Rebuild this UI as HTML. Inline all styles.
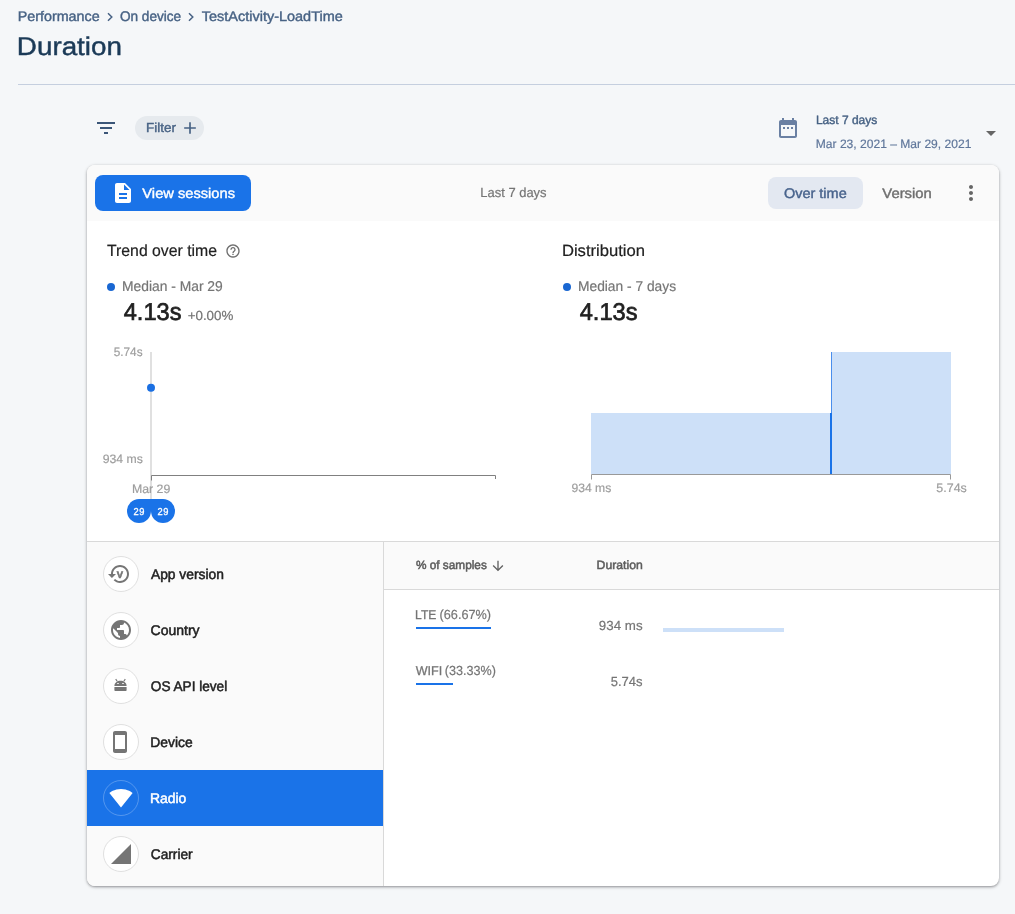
<!DOCTYPE html>
<html lang="en">
<head>
<meta charset="utf-8">
<title>Duration</title>
<style>
*{box-sizing:border-box;margin:0;padding:0}
html,body{width:1015px;height:914px;overflow:hidden}
body{text-rendering:geometricPrecision;background:#f5f7f9;font-family:"Liberation Sans",Arial,sans-serif;color:#212121;position:relative}
#root{position:absolute;left:0;top:0;width:1015px;height:914px;will-change:transform}
.a{position:absolute;white-space:nowrap;line-height:1;display:block}
.t{position:absolute;white-space:nowrap;line-height:20px;height:20px;display:block;transform-origin:0 50%;-webkit-text-stroke:0.2px currentColor}
.m{font-weight:400;-webkit-text-stroke:0.4px currentColor}
svg{display:block}
/* header */
.crumb{color:#476284}
.title{color:#1b3a57}
.sep{left:18px;top:84px;width:997px;height:1px;background:#c5cfdf}
.chip{left:135px;top:116px;width:69px;height:24px;border-radius:12px;background:#e6eaee}
/* card */
.card{left:87px;top:165px;width:912px;height:721px;background:#fff;border-radius:8px;box-shadow:0 1px 2px 0 rgba(30,30,32,.3),0 1px 3px 1px rgba(30,30,32,.15)}
.chead{left:0;top:0;width:912px;height:56px;background:#fafafa;border-radius:8px 8px 0 0}
.btn{left:8px;top:10px;width:156px;height:36px;border-radius:8px;background:#1a73e8}
.tog{left:681px;top:12px;width:95px;height:32px;border-radius:8px;background:#e3e8f1}
.hl{background:#d9d9d9}
.side{left:0;top:377px;width:296px;height:344px;background:#fafafa;border-radius:0 0 0 8px}
.thead{left:297px;top:377px;width:615px;height:47px;background:#fafafa}
.ic{width:36px;height:36px;border-radius:50%;border:1px solid #e0e0e0;background:#fff;left:16px}
.sel{left:0;top:605px;width:296px;height:56px;background:#1a73e8}
.mm{-webkit-text-stroke:0.3px currentColor}
.g7{color:#757575}.g6{color:#616161}.g9{color:#9e9e9e}
</style>
</head>
<body>
<div id="root">

<!-- breadcrumb -->
<span class="t crumb m" id="bc1" style="left:17px;top:6px;font-size:14px;transform:translateX(0.73px) scaleX(1.022) ">Performance</span>
<svg class="a" style="left:104px;top:10px" width="12" height="14" viewBox="0 0 12 14"><path d="M4 3.2l3.8 3.8L4 10.8" fill="none" stroke="#476284" stroke-width="1.5"/></svg>
<span class="t crumb m" id="bc2" style="left:119px;top:6px;font-size:14px;transform:translateX(0.91px) scaleX(0.972) ">On device</span>
<svg class="a" style="left:185px;top:10px" width="12" height="14" viewBox="0 0 12 14"><path d="M4 3.2l3.8 3.8L4 10.8" fill="none" stroke="#476284" stroke-width="1.5"/></svg>
<span class="t crumb m" id="bc3" style="left:201px;top:6px;font-size:14px;transform:translateX(0.85px) scaleX(1.033) ">TestActivity-LoadTime</span>
<h1 class="t title" id="ttl" style="left:16px;top:32px;font-size:25.5px;line-height:30px;height:30px;font-weight:400;-webkit-text-stroke:0.45px currentColor;transform:translateX(0.82px) scaleX(1.091);">Duration</h1>
<div class="a sep"></div>

<!-- filter row -->
<svg class="a" style="left:94px;top:116px" width="24" height="24" viewBox="0 0 24 24"><path fill="#3b5678" d="M10 18h4v-2h-4v2zM3 6v2h18V6H3zm3 7h12v-2H6v2z"/></svg>
<div class="a chip"></div>
<span class="t m" id="flt" style="left:146px;top:118px;font-size:13px;color:#476284;transform:translateX(0.04px) scaleX(1.034) ">Filter</span>
<svg class="a" style="left:180px;top:118px" width="20" height="20" viewBox="0 0 24 24"><path fill="#476284" d="M19 13h-6v6h-2v-6H5v-2h6V5h2v6h6v2z"/></svg>

<!-- date range -->
<svg class="a" style="left:776px;top:116px" width="24" height="24" viewBox="0 0 24 24"><path fill="#6a80a3" d="M9 11H7v2h2v-2zm4 0h-2v2h2v-2zm4 0h-2v2h2v-2zm2-7h-1V2h-2v2H8V2H6v2H5c-1.11 0-1.99.9-1.99 2L3 20c0 1.1.89 2 2 2h14c1.1 0 2-.9 2-2V6c0-1.1-.9-2-2-2zm0 16H5V9h14v11z"/></svg>
<span class="t m" id="d1" style="left:815px;top:110px;font-size:12px;color:#476284;transform:translateX(0.95px) scaleX(0.999) ">Last 7 days</span>
<span class="t" id="d2" style="left:815px;top:134px;font-size:12.2px;color:#60779b;transform:translateX(0.75px) scaleX(0.990) ">Mar 23, 2021 – Mar 29, 2021</span>
<svg class="a" style="left:985px;top:130px" width="12" height="8" viewBox="0 0 12 8"><path fill="#666" d="M1 1h10L6 6z"/></svg>

<!-- card -->
<div class="a card">
<div class="a chead"></div>
<div class="a btn"></div>
<svg class="a" style="left:23.5px;top:16px" width="24" height="24" viewBox="0 0 24 24"><path fill="#fff" d="M14 2H6c-1.1 0-1.99.9-1.99 2L4 20c0 1.1.89 2 1.99 2H18c1.1 0 2-.9 2-2V8l-6-6zm2 16H8v-2h8v2zm0-4H8v-2h8v2zm-3-5V3.500l5.500 5.500H13z"/></svg>
<span class="t m" id="vs" style="left:55px;top:18px;font-size:14px;color:#fff;transform:translateX(0.36px) scaleX(1.047) ">View sessions</span>
<span class="t g7" id="l7" style="left:393px;top:18px;font-size:13.2px;transform:translateX(0.36px) scaleX(0.981) ">Last 7 days</span>
<div class="a tog"></div>
<span class="t m" id="ot" style="left:696px;top:18px;font-size:14px;color:#48638c;transform:translateX(0.94px) scaleX(1.034) ">Over time</span>
<span class="t m g7" id="ver" style="left:795px;top:18px;font-size:14px;color:#6f6f6f;transform:translateX(0.36px) scaleX(1.059) ">Version</span>
<svg class="a" style="left:871.5px;top:16px" width="24" height="24" viewBox="0 0 24 24"><path fill="#666" d="M12 8c1.100 0 2-.9 2-2s-.9-2-2-2-2 .9-2 2 .9 2 2 2zm0 2c-1.100 0-2 .9-2 2s.9 2 2 2 2-.9 2-2-.9-2-2-2zm0 6c-1.100 0-2 .9-2 2s.9 2 2 2 2-.9 2-2-.9-2-2-2z"/></svg>

<!-- trend -->
<span class="t" id="tr" style="left:20px;top:76px;font-size:16.2px;color:#212121;-webkit-text-stroke:0.2px currentColor;transform:translateX(0.00px) scaleX(0.976) ">Trend over time</span>
<svg class="a" style="left:138px;top:78px" width="16" height="16" viewBox="0 0 24 24"><path fill="#6e6e6e" d="M11 18h2v-2h-2v2zm1-16C6.480 2 2 6.480 2 12s4.480 10 10 10 10-4.480 10-10S17.520 2 12 2zm0 18c-4.410 0-8-3.590-8-8s3.590-8 8-8 8 3.590 8 8-3.590 8-8 8zm0-14c-2.210 0-4 1.790-4 4h2c0-1.100.9-2 2-2s2 .9 2 2c0 2-3 1.750-3 5h2c0-2.250 3-2.500 3-5 0-2.210-1.790-4-4-4z"/></svg>
<div class="a" style="left:20px;top:118px;width:8px;height:8px;border-radius:50%;background:#1967d2"></div>
<span class="t g7" id="md1" style="left:34px;top:112px;font-size:14.2px;transform:translateX(0.96px) scaleX(0.976) ">Median - Mar 29</span>
<span class="t m" id="v1" style="left:36px;top:134px;font-size:24.3px;line-height:28px;height:28px;color:#212121;-webkit-text-stroke-width:0.7px;transform:translateX(0.71px) scaleX(0.972) ">4.13s</span>
<span class="t g7" id="pc" style="left:100px;top:141px;font-size:13.2px;transform:translateX(0.63px) scaleX(1.014) ">+0.00%</span>

<svg class="a" style="left:0;top:170px" width="456" height="200" viewBox="0 0 456 200">
<rect x="63" y="17" width="2" height="147" fill="#e0e0e0"/>
<path d="M64.5 145.5v-5H408.5V144" fill="none" stroke="#808080" stroke-width="1"/>
<circle cx="64" cy="52.800" r="4" fill="#1a6fe2"/>
<path d="M64 164v12a12 12 0 1 1-12-12z" fill="#1a73e8"/>
<path d="M64 164v12a12 12 0 1 0 12-12z" fill="#1a73e8"/>
</svg>
<span class="t g9" id="y1" style="left:26px;top:177px;font-size:12.2px;transform:translateX(0.74px) scaleX(0.967) ">5.74s</span>
<span class="t g9" id="y2" style="left:15px;top:284px;font-size:12.2px;transform:translateX(0.65px) scaleX(1.004) ">934 ms</span>
<span class="t g9" id="x1" style="left:44px;top:314px;font-size:12.2px;transform:translateX(0.96px) scaleX(1.010) ">Mar 29</span>
<span class="t m" id="c1" style="left:46px;top:338px;font-size:10px;transform:translateX(0.5px) scaleX(0.93);-webkit-text-stroke-width:0.3px;color:#fff;letter-spacing:0.75px">29</span>
<span class="t m" id="c2" style="left:70px;top:338px;font-size:10px;transform:translateX(0.5px) scaleX(0.93);-webkit-text-stroke-width:0.3px;color:#fff;letter-spacing:0.75px">29</span>

<!-- distribution -->
<span class="t" id="ds" style="left:474px;top:76px;font-size:16.2px;color:#212121;-webkit-text-stroke:0.2px currentColor;transform:translateX(0.90px) scaleX(1.026) ">Distribution</span>
<div class="a" style="left:476px;top:118px;width:8px;height:8px;border-radius:50%;background:#1967d2"></div>
<span class="t g7" id="md2" style="left:491px;top:112px;font-size:14.2px;transform:translateX(0.00px) scaleX(0.971) ">Median - 7 days</span>
<span class="t m" id="v2" style="left:492px;top:134px;font-size:24.3px;line-height:28px;height:28px;color:#212121;-webkit-text-stroke-width:0.7px;transform:translateX(0.63px) scaleX(0.975) ">4.13s</span>
<svg class="a" style="left:456px;top:170px" width="456" height="200" viewBox="0 0 456 200">
<rect x="48" y="78" width="240" height="61" fill="#cde0f8"/>
<rect x="288" y="17" width="120" height="122" fill="#cde0f8"/>
<rect x="287" y="78" width="2" height="61" fill="#1a73e8"/>
<rect x="288" y="17" width="1" height="61" fill="#4a8eec"/>
<path d="M48.5 144.5v-5H407.5V144.500" fill="none" stroke="#999" stroke-width="1"/>
</svg>
<span class="t g9" id="h1" style="left:484px;top:313px;font-size:12.2px;transform:translateX(0.43px) scaleX(0.996) ">934 ms</span>
<span class="t g9" id="h2" style="left:849px;top:313px;font-size:12.2px;transform:translateX(0.35px) scaleX(1.020) ">5.74s</span>

<!-- lower -->
<div class="a hl" style="left:0;top:376px;width:912px;height:1px"></div>
<div class="a side"></div>
<div class="a hl" style="left:296px;top:377px;width:1px;height:344px"></div>
<div class="a thead"></div>
<div class="a hl" style="left:297px;top:424px;width:615px;height:1px"></div>
<div class="a sel"></div>

<div class="a ic" style="top:391px"></div>
<div class="a ic" style="top:447px"></div>
<div class="a ic" style="top:503px"></div>
<div class="a ic" style="top:559px"></div>
<div class="a ic" style="top:615px;background:transparent;border-color:rgba(255,255,255,.25)"></div>
<div class="a ic" style="top:671px"></div>

<svg class="a" style="left:20.2px;top:397px" width="24" height="24" viewBox="0 0 24 24"><path fill="#757575" d="M13 3c-4.970 0-9 4.030-9 9H1l3.890 3.890.07.140L9 12H6c0-3.870 3.130-7 7-7s7 3.130 7 7-3.130 7-7 7c-1.930 0-3.680-.79-4.940-2.060l-1.420 1.420C8.270 19.990 10.510 21 13 21c4.970 0 9-4.030 9-9s-4.030-9-9-9z"/><text x="12.9" y="15.9" text-anchor="middle" font-family="Liberation Sans,Arial,sans-serif" font-weight="700" font-size="9.4" fill="#757575" stroke="#757575" stroke-width="0.6">V</text></svg>
<svg class="a" style="left:21.6px;top:453px" width="24" height="24" viewBox="0 0 24 24"><path fill="#757575" d="M12 2C6.480 2 2 6.480 2 12s4.480 10 10 10 10-4.480 10-10S17.520 2 12 2zm-1 17.930c-3.950-.49-7-3.850-7-7.930 0-.62.080-1.210.21-1.790L9 15v1c0 1.100.9 2 2 2v1.930zm6.900-2.540c-.26-.81-1-1.390-1.900-1.390h-1v-3c0-.55-.45-1-1-1H8v-2h2c.55 0 1-.45 1-1V7h2c1.100 0 2-.9 2-2v-.41c2.930 1.190 5 4.060 5 7.410 0 2.080-.8 3.970-2.100 5.390z"/></svg>
<svg class="a" style="left:21.8px;top:509px" width="24" height="24" viewBox="0 0 24 24"><g fill="#757575"><path d="M5.4 11.9c0-3.200 2.700-5.200 6.100-5.200s6.100 2 6.100 5.200z"/><path d="M5.400 12.900h12.200v3.300c0 .45-.35.800-.8.800H6.200c-.45 0-.8-.35-.8-.8z"/></g><path d="M6.700 5.100l1.500 2.200M16.300 5.100l-1.500 2.200" stroke="#757575" stroke-width="1.1" fill="none"/><ellipse cx="9" cy="9.500" rx="1" ry="0.550" fill="#fff"/><ellipse cx="14" cy="9.500" rx="1" ry="0.550" fill="#fff"/></svg>
<svg class="a" style="left:21.35px;top:565px" width="24" height="24" viewBox="0 0 24 24"><path fill="#757575" d="M17 1.010L7 1c-1.100 0-2 .9-2 2v18c0 1.100.9 2 2 2h10c1.100 0 2-.9 2-2V3c0-1.100-.9-1.990-2-1.990zM17 19H7V5h10v14z"/></svg>
<svg class="a" style="left:21.8px;top:621px" width="24" height="24" viewBox="0 0 24 24"><path fill="#fff" d="M12.010 21.490L23.640 7c-.45-.34-4.930-4-11.640-4C5.280 3 .81 6.660.36 7l11.630 14.490.01.010.01-.01z"/></svg>
<svg class="a" style="left:22.2px;top:677px" width="24" height="24" viewBox="0 0 24 24"><path fill="#757575" d="M2 22h20V2z"/></svg>

<span class="t m" id="s1" style="left:63px;top:399px;font-size:14px;-webkit-text-stroke-width:0.5px;transform:translateX(0.92px) scaleX(0.988) ">App version</span>
<span class="t m" id="s2" style="left:63px;top:455px;font-size:14px;-webkit-text-stroke-width:0.5px;transform:translateX(0.51px) scaleX(1.002) ">Country</span>
<span class="t m" id="s3" style="left:63px;top:511px;font-size:14px;-webkit-text-stroke-width:0.5px;transform:translateX(0.80px) scaleX(0.972) ">OS API level</span>
<span class="t m" id="s4" style="left:63px;top:567px;font-size:14px;-webkit-text-stroke-width:0.5px;transform:translateX(0.34px) scaleX(0.989) ">Device</span>
<span class="t m" id="s5" style="left:62px;top:623px;font-size:14px;-webkit-text-stroke-width:0.5px;color:#fff;transform:translateX(0.94px) scaleX(0.996) ">Radio</span>
<span class="t m" id="s6" style="left:63px;top:679px;font-size:14px;-webkit-text-stroke-width:0.5px;transform:translateX(0.79px) scaleX(0.979) ">Carrier</span>

<span class="t m g6" id="th1" style="left:328px;top:390px;font-size:12px;transform:translateX(0.92px) scaleX(0.984);-webkit-text-stroke-width:0.5px;color:#5c5c5c">% of samples</span>
<svg class="a" style="left:403px;top:393px" width="16" height="16" viewBox="0 0 24 24"><path fill="#616161" d="M20 12l-1.410-1.410L13 16.170V4h-2v12.170l-5.580-5.590L4 12l8 8 8-8z"/></svg>
<span class="t m g6" id="th2" style="left:509px;top:390px;font-size:12px;transform:translateX(0.55px) scaleX(1.019);-webkit-text-stroke-width:0.5px;color:#5c5c5c">Duration</span>

<span class="t g7 mm" id="r1a" style="left:328px;top:440px;font-size:12.8px;transform:translateX(0.09px) scaleX(0.943);">LTE</span>
<span class="t g7" id="r1b" style="left:352px;top:440px;font-size:13.2px;transform:translateX(0.56px) scaleX(0.963) ">(66.67%)</span>
<div class="a" style="left:329px;top:462px;width:75px;height:2px;background:#1a73e8"></div>
<span class="t g7" id="r1v" style="left:511px;top:451px;font-size:13.2px;transform:translateX(0.86px) scaleX(1.010) ">934 ms</span>
<div class="a" style="left:576px;top:463px;width:120.6px;height:4px;background:#cde0f8"></div>
<span class="t g7 mm" id="r2a" style="left:328px;top:496px;font-size:12.8px;transform:translateX(0.70px) scaleX(0.984) ">WIFI</span>
<span class="t g7" id="r2b" style="left:357px;top:496px;font-size:13.2px;transform:translateX(0.83px) scaleX(0.955) ">(33.33%)</span>
<div class="a" style="left:329px;top:518px;width:37px;height:2px;background:#1a73e8"></div>
<span class="t g7" id="r2v" style="left:523px;top:507px;font-size:13.2px;transform:translateX(0.70px) scaleX(0.986) ">5.74s</span>
</div>

</div>
</body>
</html>
